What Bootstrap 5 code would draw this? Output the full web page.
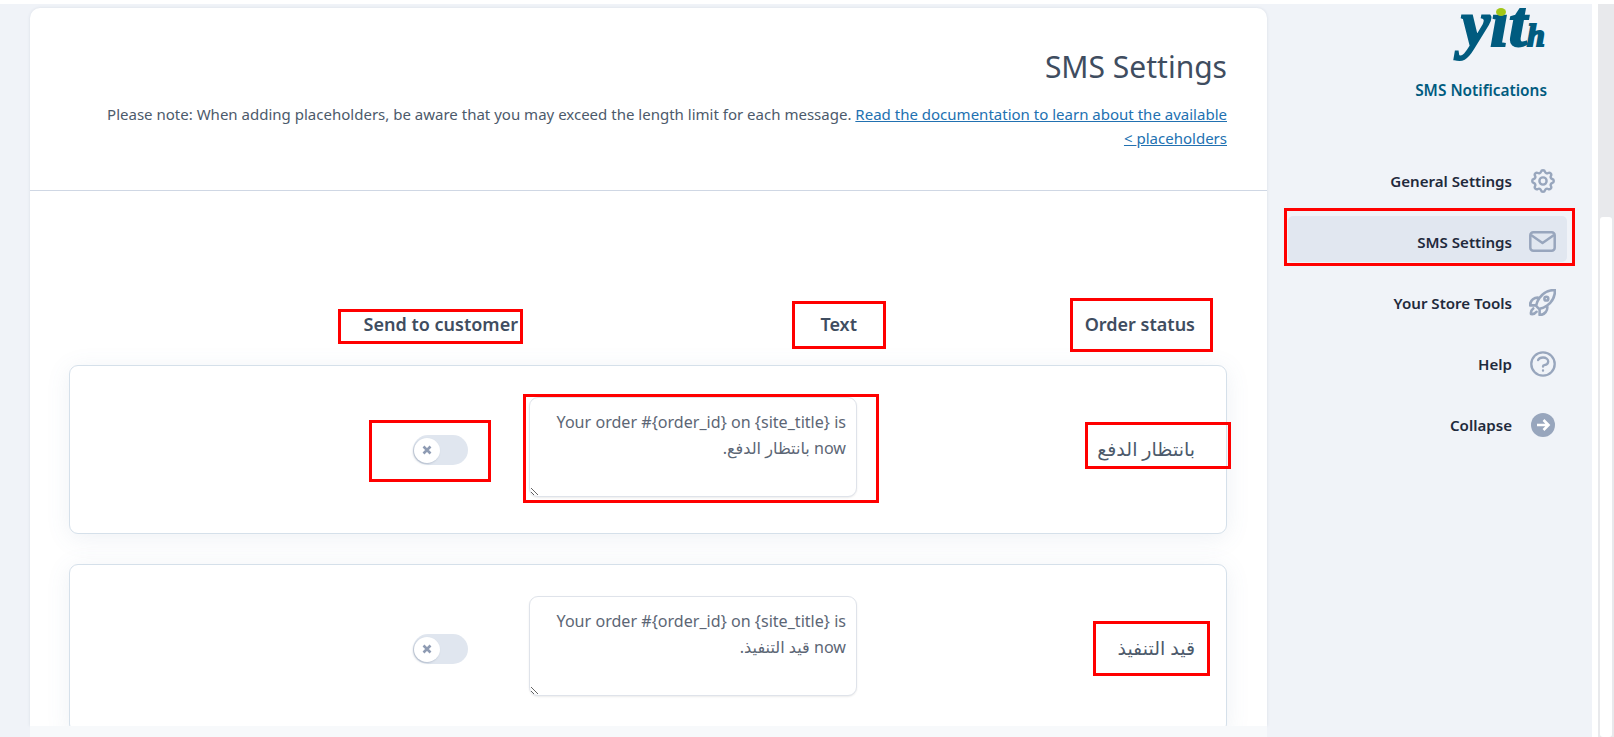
<!DOCTYPE html>
<html lang="ar" dir="rtl">
<head>
  <meta charset="UTF-8" />
  <title>SMS Settings</title>
  <link href="https://cdn.jsdelivr.net/npm/bootstrap@5.3.0/dist/css/bootstrap.min.css" rel="stylesheet" />
  <script src="https://cdn.jsdelivr.net/npm/bootstrap@5.3.0/dist/js/bootstrap.bundle.min.js"></script>
  <style>
    html, body { height: 737px; overflow: hidden; }
    body { font-family: "Noto Sans", "DejaVu Sans", sans-serif; background: #fff; color: #4c5a6b; position: relative; }
    .shell { height: 737px; padding-top: 4px; }
    .scroll-gutter { width: 22px; flex: none; padding-left: 6px; }
    .scroll-track { height: 100%; background: #e8e9ec; padding: 213px 2px 0; }
    .scroll-thumb { height: 100%; background: #fff; border-radius: 3px; }
    .side-panel { width: 325px; flex: none; background: #f0f3f8; }
    .brand-box { height: 151px; padding: 4px 45px 0 0; }
    .brand-name { color: #005b7f; font-size: 15.4px; font-weight: 600; margin-top: 16px; text-align: right; }
    .side-item { height: 46px; margin: 0 25px 15px 21px; padding: 5px 11px 0 0; gap: 17px; color: #1f2a3c; font-size: 15.1px; font-weight: 600; border-radius: 5px; }
    .side-item.picked { background: #e1e7f0; }
    .side-label { padding-top: 2px; }
    .main-area { flex: 1; background: #f0f3f8; padding: 4px 0 0 30px; min-width: 0; }
    .sheet { background: #fff; border-radius: 10px 10px 0 0; height: 718px; box-shadow: 0 0 3px rgba(80,100,130,.15); overflow: hidden; }
    .foot-band { height: 11px; background: #f7f9fb; }
    .sheet-head { height: 183px; padding: 41px 40px 0; border-bottom: 1px solid #cfd7e4; }
    .sheet-head h1 { font-size: 30px; font-weight: 400; color: #3f4d60; margin-bottom: 17px; }
    .sheet-head p { font-size: 15.03px; line-height: 24px; margin: 0; }
    .sheet-head a { color: #2271b1; }
    .sheet-body { padding: 120px 40px 0 39px; }
    .col-titles { font-size: 18px; font-weight: 600; color: #3f4d60; height: 54px; }
    .status-col { width: 370px; flex: none; padding-right: 32px; }
    .order-row .status-col { width: 369px; padding-right: 31px; }
    .text-col { width: 339px; flex: none; align-self: flex-start; padding-top: 31px; }
    .send-col { flex: 1; }
    .order-row { height: 169px; border: 1px solid #d5e0ea; border-radius: 9px; background: #fff; box-shadow: 0 4px 24px rgba(90,120,160,.1); margin-bottom: 30px; }
    .status-name { font-size: 19px; }
    .msg-box { width: 328px; height: 100px; font-size: 16.1px; line-height: 26px; padding: 11px 10px 10px; resize: both; border: 1px solid #dfe3ea; border-radius: 9px; color: #5c6675; box-shadow: 0 1px 2px rgba(0,0,0,.08); background: #fff; }
    .off-toggle { width: 55px; height: 30px; border-radius: 15px; background: #e0e6ef; margin-right: 50px; position: relative; }
    .off-knob { position: absolute; left: 1px; top: 3px; width: 26px; height: 25px; border-radius: 50%; background: #fff; box-shadow: -1px 1px 2px rgba(70,90,120,.3); }
    .redbox { position: absolute; border: 3px solid #f00; pointer-events: none; }
    .side-icon { width: 27px; flex: none; }
    .side-icon svg { display: block; margin: 0 auto; }
    .logo-mark { display: block; overflow: visible; direction: ltr; }
  </style>
</head>
<body>
<div class="shell d-flex">
  <div class="scroll-gutter"><div class="scroll-track"><div class="scroll-thumb"></div></div></div>
  <aside class="side-panel">
    <div class="brand-box">
      <svg class="logo-mark" width="88" height="55" viewBox="0 0 88 55">
        <text x="2" y="38" fill="#005b7f" stroke="#005b7f" stroke-width="2" font-family="Liberation Serif" font-style="italic" font-weight="700" font-size="66">yıt<tspan font-size="32">h</tspan></text>
        <ellipse cx="42" cy="4" rx="5" ry="4" fill="#a2c617"/>
      </svg>
      <div class="brand-name" dir="ltr">SMS Notifications</div>
    </div>
    <div class="side-item d-flex align-items-center">
      <span class="side-icon">
        <svg width="24" height="24" viewBox="2 2 20 20" fill="none" stroke="#98a6bd" stroke-width="2"><path d="M10.325 4.317c.426-1.756 2.924-1.756 3.35 0a1.724 1.724 0 002.573 1.066c1.543-.94 3.31.826 2.37 2.37a1.724 1.724 0 001.065 2.572c1.756.426 1.756 2.924 0 3.35a1.724 1.724 0 00-1.066 2.573c.94 1.543-.826 3.31-2.37 2.37a1.724 1.724 0 00-2.572 1.065c-.426 1.756-2.924 1.756-3.35 0a1.724 1.724 0 00-2.573-1.066c-1.543.94-3.31-.826-2.37-2.37a1.724 1.724 0 00-1.065-2.572c-1.756-.426-1.756-2.924 0-3.35a1.724 1.724 0 001.066-2.573c-.94-1.543.826-3.31 2.37-2.37.996.608 2.296.07 2.572-1.065z"/><circle cx="12" cy="12" r="3"/></svg>
      </span>
      <span class="side-label">General Settings</span>
    </div>
    <div class="side-item picked d-flex align-items-center">
      <span class="side-icon">
        <svg width="27" height="21" viewBox="0 0 27 21" fill="none" stroke="#98a6bd" stroke-width="2.5" stroke-linejoin="round"><rect x="1.3" y="1.3" width="24.4" height="18.4" rx="3"/><path d="M2 4l11.5 8L25 4"/></svg>
      </span>
      <span class="side-label">SMS Settings</span>
    </div>
    <div class="side-item d-flex align-items-center">
      <span class="side-icon">
        <svg width="27" height="27" viewBox="1.5 1.5 21 21" fill="none" stroke="#98a6bd" stroke-width="2" stroke-linecap="round" stroke-linejoin="round"><path d="M15.59 14.37a6 6 0 01-5.84 7.38v-4.8m5.84-2.58a14.98 14.98 0 006.16-12.12A14.98 14.98 0 009.631 8.41m5.96 5.96a14.926 14.926 0 01-5.841 2.58m-.119-8.54a6 6 0 00-7.381 5.84h4.8m2.581-5.84a14.927 14.927 0 00-2.58 5.84m2.699 2.7c-.103.021-.207.041-.311.06a15.09 15.09 0 01-2.448-2.448 14.9 14.9 0 01.06-.312m-2.24 2.39a4.493 4.493 0 00-1.757 4.306 4.493 4.493 0 004.306-1.758M16.5 9a1.5 1.5 0 11-3 0 1.5 1.5 0 013 0z"/></svg>
      </span>
      <span class="side-label">Your Store Tools</span>
    </div>
    <div class="side-item d-flex align-items-center">
      <span class="side-icon">
        <svg width="26" height="26" viewBox="2 2 20 20" fill="none" stroke="#98a6bd" stroke-width="1.8" stroke-linecap="round" stroke-linejoin="round"><path d="M8.228 9c.549-1.165 2.03-2 3.772-2 2.21 0 4 1.343 4 3 0 1.4-1.278 2.575-3.006 2.907-.542.104-.994.54-.994 1.093m0 3h.01M21 12a9 9 0 11-18 0 9 9 0 0118 0z"/></svg>
      </span>
      <span class="side-label">Help</span>
    </div>
    <div class="side-item d-flex align-items-center">
      <span class="side-icon">
        <svg width="24" height="24" viewBox="0 0 24 24"><circle cx="12" cy="12" r="12" fill="#98a6bd"/><path d="M6 12h11M12.5 7l5 5-5 5" fill="none" stroke="#fff" stroke-width="2.6"/></svg>
      </span>
      <span class="side-label">Collapse</span>
    </div>
  </aside>
  <main class="main-area">
    <div class="sheet">
      <div class="sheet-head">
        <h1>SMS Settings</h1>
        <p>Please note: When adding placeholders, be aware that you may exceed the length limit for each message. <a href="#">Read the documentation to learn about the available placeholders &gt;</a></p>
      </div>
      <div class="sheet-body">
        <div class="col-titles d-flex align-items-start">
          <div class="status-col">Order status</div>
          <div class="text-col pt-0">Text</div>
          <div class="send-col">Send to customer</div>
        </div>
        <div class="order-row d-flex align-items-center">
          <div class="status-col status-name">بانتظار الدفع</div>
          <div class="text-col"><textarea class="msg-box d-block">Your order #{order_id} on {site_title} is now بانتظار الدفع.</textarea></div>
          <div class="send-col"><div class="off-toggle"><span class="off-knob d-flex align-items-center justify-content-center"><svg width="10" height="10" viewBox="0 0 10 10"><path d="M1.5 1.5l7 7M8.5 1.5l-7 7" stroke="#8e9bb3" stroke-width="2.6"/></svg></span></div></div>
        </div>
        <div class="order-row d-flex align-items-center">
          <div class="status-col status-name">قيد التنفيذ</div>
          <div class="text-col"><textarea class="msg-box d-block">Your order #{order_id} on {site_title} is now قيد التنفيذ.</textarea></div>
          <div class="send-col"><div class="off-toggle"><span class="off-knob d-flex align-items-center justify-content-center"><svg width="10" height="10" viewBox="0 0 10 10"><path d="M1.5 1.5l7 7M8.5 1.5l-7 7" stroke="#8e9bb3" stroke-width="2.6"/></svg></span></div></div>
        </div>
      </div>
    </div>
    <div class="foot-band"></div>
  </main>
</div>
<!-- red annotation boxes drawn over the screenshot -->
<div class="redbox" style="left:1284px;top:208px;width:291px;height:58px"></div>
<div class="redbox" style="left:338px;top:309px;width:185px;height:35px"></div>
<div class="redbox" style="left:792px;top:301px;width:94px;height:48px"></div>
<div class="redbox" style="left:1070px;top:298px;width:143px;height:54px"></div>
<div class="redbox" style="left:523px;top:394px;width:356px;height:109px"></div>
<div class="redbox" style="left:369px;top:420px;width:122px;height:62px"></div>
<div class="redbox" style="left:1085px;top:422px;width:146px;height:47px"></div>
<div class="redbox" style="left:1093px;top:621px;width:117px;height:55px"></div>
</body>
</html>
